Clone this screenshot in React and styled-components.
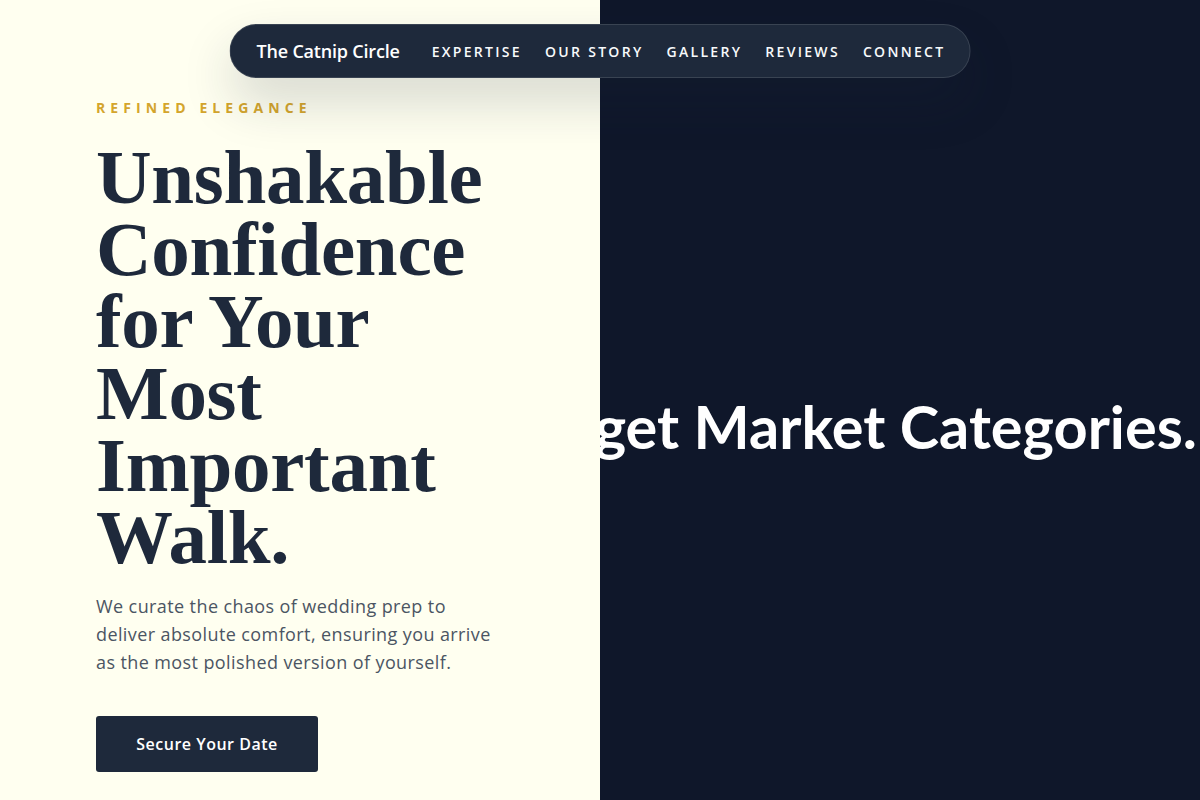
import React from "react";
import styled, { createGlobalStyle } from "styled-components";

const GlobalStyle = createGlobalStyle`
  * { box-sizing: border-box; }
  html, body { margin: 0; padding: 0; }
  body {
    font-family: "Open Sans", "Liberation Sans", sans-serif;
    background: #0f172a;
    overflow: hidden;
  }
`;

const Page = styled.div`
  position: relative;
  display: grid;
  grid-template-columns: 600px 1fr;
  width: 1200px;
  height: 800px;
  overflow: hidden;
`;

const NavBar = styled.nav`
  position: absolute;
  top: 24px;
  left: 50%;
  transform: translateX(-50%);
  z-index: 10;
  display: flex;
  align-items: center;
  gap: 32px;
  height: 54px;
  padding: 0 24px 0 26px;
  border-radius: 999px;
  background: #1e293b;
  border: 1px solid rgba(255, 255, 255, 0.12);
  box-shadow: 0 24px 50px rgba(30, 41, 59, 0.18);
  white-space: nowrap;
`;

const Brand = styled.a`
  font-family: "Open Sans", sans-serif;
  font-size: 18px;
  font-weight: 600;
  letter-spacing: -0.2px;
  color: #ffffff;
  text-decoration: none;
`;

const NavLinks = styled.div`
  display: flex;
  align-items: center;
  gap: 23px;
`;

const NavLink = styled.a`
  font-family: "Open Sans", sans-serif;
  font-size: 14px;
  font-weight: 600;
  letter-spacing: 2.3px;
  color: #f8fafc;
  text-decoration: none;
`;

const LeftPanel = styled.section`
  position: relative;
  z-index: 2;
  display: flex;
  flex-direction: column;
  align-items: flex-start;
  padding: 98px 40px 0 96px;
  background: #fffff0;
`;

const Eyebrow = styled.span`
  font-family: "Open Sans", sans-serif;
  font-size: 14px;
  line-height: 20px;
  font-weight: 700;
  letter-spacing: 5.1px;
  color: #d4a52c;
`;

const Headline = styled.h1`
  margin: 23px 0 0;
  font-family: "Liberation Serif", "Times New Roman", serif;
  font-size: 77px;
  line-height: 72px;
  font-weight: 700;
  letter-spacing: -0.3px;
  color: #1e293b;
`;

const Lead = styled.p`
  margin: 19px 0 0;
  max-width: 404px;
  font-family: "Open Sans", sans-serif;
  font-size: 18px;
  line-height: 28px;
  letter-spacing: 0.4px;
  color: #4b5563;
`;

const PrimaryButton = styled.button`
  margin-top: 40px;
  width: 222px;
  height: 56px;
  border: none;
  border-radius: 3px;
  background: #1e293b;
  color: #ffffff;
  font-family: "Open Sans", sans-serif;
  font-size: 16px;
  font-weight: 600;
  letter-spacing: 0.5px;
  cursor: pointer;
`;

const RightPanel = styled.section`
  display: flex;
  align-items: center;
  justify-content: flex-end;
  padding: 54px 3px 0 0;
  background: #0f172a;
  min-width: 0;
`;

const BigTitle = styled.h2`
  margin: 0;
  flex-shrink: 0;
  white-space: nowrap;
  font-family: Lato, "Liberation Sans", sans-serif;
  font-size: 59.5px;
  font-weight: 700;
  line-height: 1.2;
  color: #ffffff;
`;

const links = ["EXPERTISE", "OUR STORY", "GALLERY", "REVIEWS", "CONNECT"];

export default function App() {
  return (
    <>
      <GlobalStyle />
      <Page>
        <NavBar>
          <Brand href="#">The Catnip Circle</Brand>
          <NavLinks>
            {links.map((l) => (
              <NavLink key={l} href="#">
                {l}
              </NavLink>
            ))}
          </NavLinks>
        </NavBar>
        <LeftPanel>
          <Eyebrow>REFINED ELEGANCE</Eyebrow>
          <Headline>
            Unshakable
            <br />
            Confidence
            <br />
            for Your
            <br />
            Most
            <br />
            Important
            <br />
            Walk.
          </Headline>
          <Lead>
            We curate the chaos of wedding prep to deliver absolute comfort,
            ensuring you arrive as the most polished version of yourself.
          </Lead>
          <PrimaryButton>Secure Your Date</PrimaryButton>
        </LeftPanel>
        <RightPanel>
          <BigTitle>Target Market Categories.</BigTitle>
        </RightPanel>
      </Page>
    </>
  );
}
